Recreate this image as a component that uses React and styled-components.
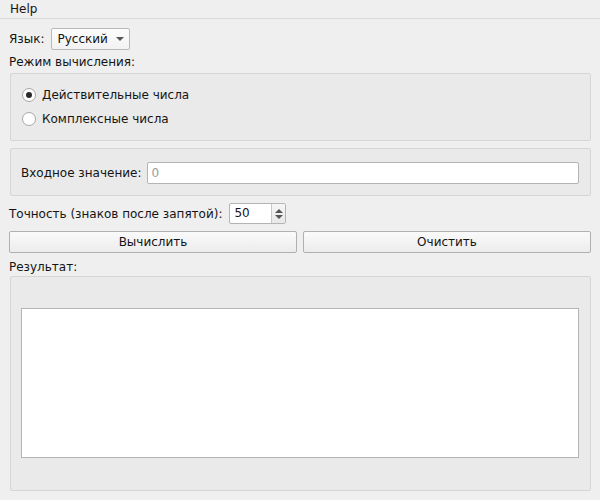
import React, { useState } from 'react';
import styled, { createGlobalStyle } from 'styled-components';

const GlobalStyle = createGlobalStyle`
  html, body {
    margin: 0;
    padding: 0;
    background: #efefef;
  }
  body {
    font-family: 'DejaVu Sans', 'Liberation Sans', sans-serif;
    font-size: 12px;
    color: #141414;
  }
`;

const App = () => {
  const [mode, setMode] = useState('real');

  return (
    <>
      <GlobalStyle />
      <Window>
        <MenuBar>
          <MenuItem>Help</MenuItem>
        </MenuBar>
        <Content>
          <Row $gap="7px">
            <span>Язык:</span>
            <Combo>
              Русский
              <Arrow />
            </Combo>
          </Row>
          <Caption>Режим вычисления:</Caption>
          <GroupBox $padding="13px 11px" $gap="8px" $direction="column" $top="3px">
            <Radio onClick={() => setMode('real')}>
              <RadioCircle $checked={mode === 'real'} />
              Действительные числа
            </Radio>
            <Radio onClick={() => setMode('complex')}>
              <RadioCircle $checked={mode === 'complex'} />
              Комплексные числа
            </Radio>
          </GroupBox>
          <GroupBox $padding="13px 11px 11px 10px" $gap="6px" $direction="row" $top="7px">
            <span>Входное значение:</span>
            <Input placeholder="0" />
          </GroupBox>
          <PrecisionRow $gap="7px">
            <span>Точность (знаков после запятой):</span>
            <Spin>
              <SpinValue>50</SpinValue>
              <SpinButtons>
                <SpinArrow $up />
                <SpinArrow />
              </SpinButtons>
            </Spin>
          </PrecisionRow>
          <Buttons>
            <Button>Вычислить</Button>
            <Button>Очистить</Button>
          </Buttons>
          <Caption $top="7px">Результат:</Caption>
          <GroupBox $padding="31px 11px 32px 10px" $direction="column" $top="1px">
            <Output />
          </GroupBox>
        </Content>
      </Window>
    </>
  );
};

export default App;

const Window = styled.div`
  width: 600px;
  height: 500px;
  background: #efefef;
  overflow: hidden;
`;

const MenuBar = styled.div`
  height: 18px;
  border-bottom: 1px solid #d9d9d9;
  display: flex;
  align-items: center;
`;

const MenuItem = styled.span`
  padding: 0 10px;
  line-height: 17px;
`;

const Content = styled.div`
  padding: 9px 9px 0 9px;
  display: flex;
  flex-direction: column;
`;

const Row = styled.div`
  display: flex;
  align-items: center;
  gap: ${({ $gap }) => $gap || '6px'};
  height: 22px;
`;

const Combo = styled.div`
  width: 72px;
  height: 20px;
  box-sizing: content-box;
  border: 1px solid #b9b9b9;
  border-radius: 2px;
  background: linear-gradient(#fcfcfc, #f2f2f2);
  display: flex;
  align-items: center;
  padding-left: 5px;
  position: relative;
`;

const Arrow = styled.span`
  position: absolute;
  right: 5px;
  top: 8px;
  width: 0;
  height: 0;
  border-left: 4px solid transparent;
  border-right: 4px solid transparent;
  border-top: 4px solid #555;
`;

const Caption = styled.div`
  margin-top: ${({ $top }) => $top || '5px'};
  height: 15px;
  line-height: 15px;
`;

const GroupBox = styled.div`
  margin-top: ${({ $top }) => $top};
  margin-left: 1px;
  width: 581px;
  box-sizing: border-box;
  border: 1px solid #d6d6d6;
  border-radius: 2px;
  background: #eaeaea;
  padding: ${({ $padding }) => $padding};
  display: flex;
  flex-direction: ${({ $direction }) => $direction};
  align-items: ${({ $direction }) => ($direction === 'row' ? 'center' : 'stretch')};
  gap: ${({ $gap }) => $gap || '0'};
`;

const Radio = styled.label`
  display: flex;
  align-items: center;
  gap: 6px;
  height: 16px;
  cursor: pointer;
`;

const RadioCircle = styled.span`
  width: 12px;
  height: 12px;
  border-radius: 50%;
  border: 1px solid #a8a8a8;
  background: #fff;
  position: relative;
  &::after {
    content: '';
    display: ${({ $checked }) => ($checked ? 'block' : 'none')};
    position: absolute;
    left: 3px;
    top: 3px;
    width: 6px;
    height: 6px;
    border-radius: 50%;
    background: #2a2a2a;
  }
`;

const Input = styled.input`
  flex: 1;
  height: 22px;
  box-sizing: border-box;
  border: 1px solid #b4b4b4;
  border-radius: 2px;
  background: #fff;
  font-family: inherit;
  font-size: 12px;
  padding: 0 3px;
  outline: none;
  &::placeholder {
    color: #9a9a9a;
  }
`;

const PrecisionRow = styled(Row)`
  margin-top: 7px;
  height: 21px;
`;

const Spin = styled.div`
  width: 57px;
  height: 21px;
  box-sizing: border-box;
  border: 1px solid #b4b4b4;
  border-radius: 2px;
  background: #fff;
  display: flex;
`;

const SpinValue = styled.span`
  flex: 1;
  padding-left: 4px;
  line-height: 19px;
`;

const SpinButtons = styled.div`
  width: 13px;
  border-left: 1px solid #c8c8c8;
  background: linear-gradient(#f6f6f6, #e8e8e8);
  display: flex;
  flex-direction: column;
  align-items: center;
  justify-content: center;
  gap: 2px;
`;

const SpinArrow = styled.span`
  width: 0;
  height: 0;
  border-left: 4px solid transparent;
  border-right: 4px solid transparent;
  ${({ $up }) => ($up ? 'border-bottom: 4px solid #555;' : 'border-top: 4px solid #555;')}
`;

const Buttons = styled.div`
  margin-top: 7px;
  display: grid;
  grid-template-columns: 1fr 1fr;
  gap: 6px;
  width: 582px;
`;

const Button = styled.button`
  height: 22px;
  border: 1px solid #b0b0b0;
  border-radius: 2px;
  background: linear-gradient(#fafafa, #ececec);
  font-family: inherit;
  font-size: 12px;
  color: #141414;
  padding: 0;
  cursor: pointer;
`;

const Output = styled.div`
  height: 150px;
  box-sizing: border-box;
  border: 1px solid #b4b4b4;
  background: #fff;
`;
